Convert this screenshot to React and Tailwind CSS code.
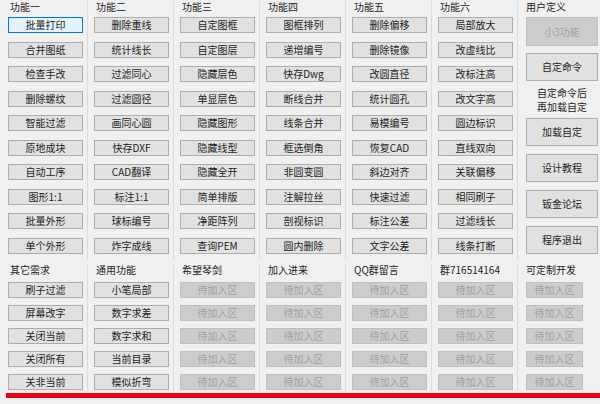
const topCols = [
  { title: '功能一', items: ['批量打印', '合并图纸', '检查手改', '删除螺纹', '智能过滤', '原地成块', '自动工序', '图形1:1', '批量外形', '单个外形'] },
  { title: '功能二', items: ['删除重线', '统计线长', '过滤同心', '过滤圆径', '画同心圆', '快存DXF', 'CAD翻译', '标注1:1', '球标编号', '炸字成线'] },
  { title: '功能三', items: ['自定图框', '自定图层', '隐藏层色', '单显层色', '隐藏图形', '隐藏线型', '隐藏全开', '简单排版', '净距阵列', '查询PEM'] },
  { title: '功能四', items: ['图框排列', '递增编号', '快存Dwg', '断线合并', '线条合并', '框选倒角', '非圆变圆', '注解拉丝', '剖视标识', '圆内删除'] },
  { title: '功能五', items: ['删除偏移', '删除镜像', '改圆直径', '统计圆孔', '易模编号', '恢复CAD', '斜边对齐', '快速过滤', '标注公差', '文字公差'] },
  { title: '功能六', items: ['局部放大', '改虚线比', '改标注高', '改文字高', '圆边标识', '直线双向', '关联偏移', '相同刷子', '过滤线长', '线条打断'] },
]

const pending = ['待加入区', '待加入区', '待加入区', '待加入区', '待加入区']

const bottomCols = [
  { title: '其它需求', items: ['刷子过滤', '屏幕改字', '关闭当前', '关闭所有', '关非当前'] },
  { title: '通用功能', items: ['小笔局部', '数字求差', '数字求和', '当前目录', '模似折弯'] },
  { title: '希望琴剑', items: pending, disabled: true },
  { title: '加入进来', items: pending, disabled: true },
  { title: 'QQ群留言', items: pending, disabled: true },
  { title: '群716514164', items: pending, disabled: true },
]

function Btn({ label, disabled, focused, className = '' }) {
  let look = 'bg-[#e1e1e1] border-[#adadad] text-[#1e1e1e]'
  if (disabled) look = 'bg-[#cccccc] border-[#bfbfbf] text-[#a0a0a0]'
  if (focused) look = 'bg-[#e5f1fb] border-[#0078d7] text-[#1e1e1e]'
  return (
    <div className={`flex items-center justify-center border text-[10px] leading-none ${look} ${className}`}>
      {label}
    </div>
  )
}

function Title({ children }) {
  return <div className="h-[12px] pl-[8px] text-[10px] leading-[12px] text-[#222]">{children}</div>
}

export default function App() {
  return (
    <div
      className="w-[600px] h-[404px] bg-[#f0f0f0] overflow-hidden flex flex-col"
      style={{ fontFamily: '"Noto Sans CJK SC", "Noto Sans", sans-serif' }}
    >
      {/* top section */}
      <div className="flex h-[260px] pl-[2px] pt-[1px]">
        {topCols.map((col, ci) => (
          <div key={ci} className="w-[86px] shrink-0 border-r border-[#dcdcdc]">
            <Title>{col.title}</Title>
            <div className="flex flex-col gap-[8.5px] pt-[4px] pl-[6px]">
              {col.items.map((it, i) => (
                <Btn key={i} label={it} focused={ci === 0 && i === 0} className="w-[75px] h-[16px]" />
              ))}
            </div>
          </div>
        ))}

        {/* user defined */}
        <div className="flex-1">
          <Title>用户定义</Title>
          <div className="flex flex-col pt-[4px] pl-[8px]">
            <Btn label="小3功能" disabled className="w-[72px] h-[29px]" />
            <Btn label="自定命令" className="w-[72px] h-[28px] mt-[7px]" />
            <div className="w-[72px] h-[37px] flex flex-col items-center justify-center text-[10px] leading-[14px] text-[#1e1e1e]">
              <div className="h-[14px]">自定命令后</div>
              <div className="h-[14px]">再加载自定</div>
            </div>
            <Btn label="加载自定" className="w-[72px] h-[28px]" />
            <Btn label="设计教程" className="w-[72px] h-[28px] mt-[8px]" />
            <Btn label="钣金论坛" className="w-[72px] h-[28px] mt-[8px]" />
            <Btn label="程序退出" className="w-[72px] h-[28px] mt-[8px]" />
          </div>
        </div>
      </div>

      {/* bottom section */}
      <div className="flex h-[131px] pl-[2px] pt-[4px]">
        {bottomCols.map((col, ci) => (
          <div key={ci} className="w-[86px] shrink-0 border-r border-[#dcdcdc]">
            <Title>{col.title}</Title>
            <div className="flex flex-col gap-[7px] pt-[6px] pl-[6px]">
              {col.items.map((it, i) => (
                <Btn key={i} label={it} disabled={col.disabled} className="w-[75px] h-[16px]" />
              ))}
            </div>
          </div>
        ))}
        <div className="flex-1">
          <Title>可定制开发</Title>
          <div className="flex flex-col gap-[7px] pt-[6px] pl-[8px]">
            {pending.map((it, i) => (
              <Btn key={i} label={it} disabled className="w-[57px] h-[16px]" />
            ))}
          </div>
        </div>
      </div>

      {/* red bar */}
      <div className="pl-[6px] pt-[2px]">
        <div className="h-[5px] bg-[#e60012]" />
      </div>
    </div>
  )
}
